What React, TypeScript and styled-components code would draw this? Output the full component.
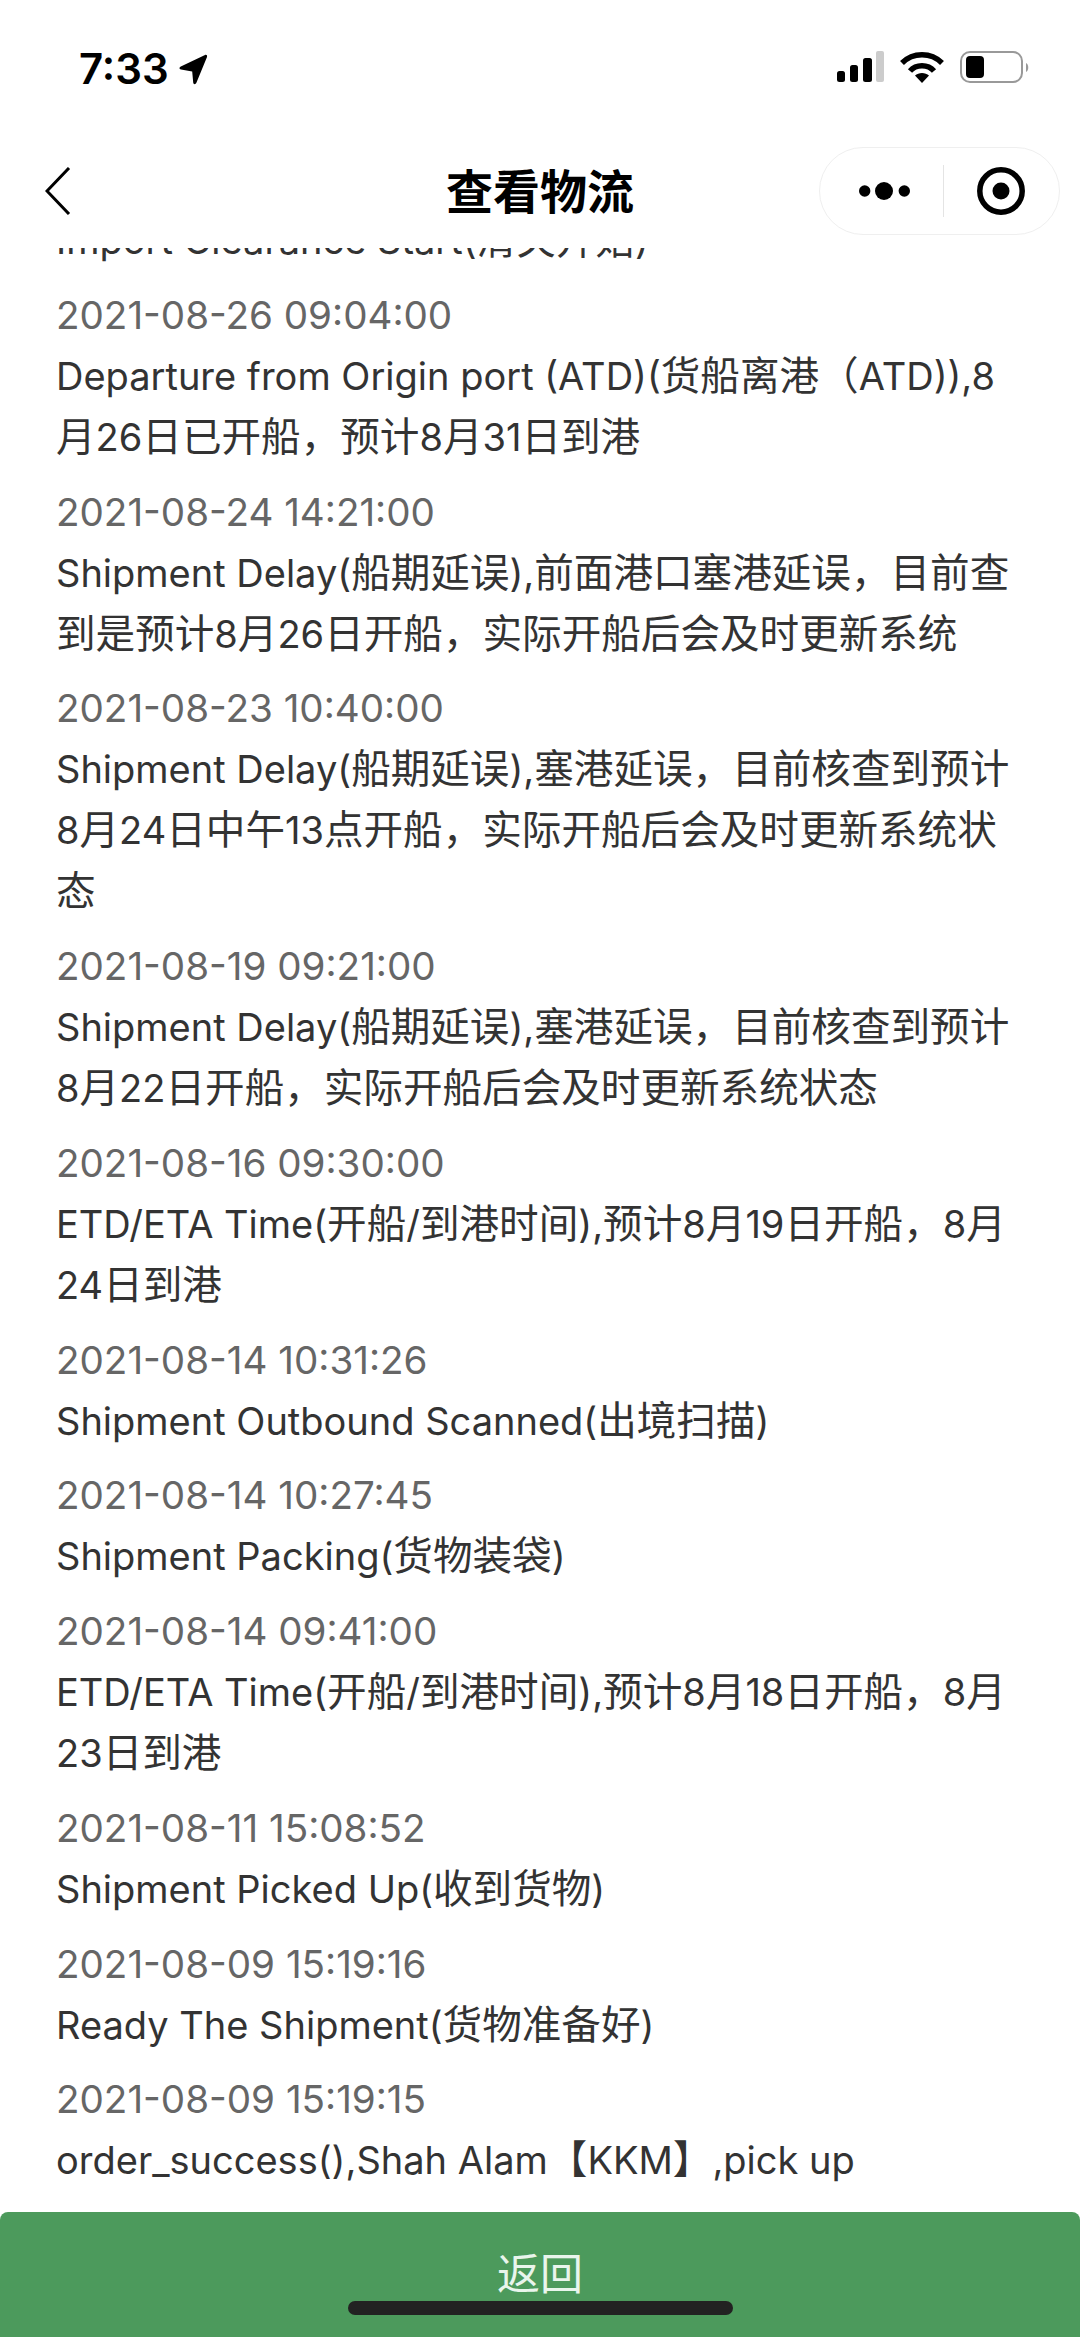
import React from 'react'
import styled, { createGlobalStyle } from 'styled-components'

const GlobalStyle = createGlobalStyle`
  html, body {
    margin: 0;
    padding: 0;
    background: #ffffff;
  }
  * {
    box-sizing: border-box;
  }
`

const Page = styled.div`
  width: 1080px;
  height: 2337px;
  display: flex;
  flex-direction: column;
  position: relative;
  overflow: hidden;
  background: #ffffff;
  font-family: Inter, 'Noto Sans CJK SC', sans-serif;
`

const StatusBar = styled.div`
  height: 136px;
  flex: none;
  padding: 51px 51px 0 79px;
  display: flex;
  justify-content: space-between;
  align-items: flex-start;
`

const Clock = styled.div`
  display: flex;
  align-items: center;
  gap: 10px;
  font-size: 42px;
  line-height: 36px;
  font-weight: 600;
  color: #000000;
`

const StatusIcons = styled.div`
  display: flex;
  align-items: center;
  gap: 16px;
`

const NavBar = styled.div`
  height: 112px;
  flex: none;
  padding: 11px 20px 13px 45px;
  display: flex;
  align-items: center;
  justify-content: space-between;
  position: relative;
`

const Title = styled.div`
  position: absolute;
  left: 0;
  right: 0;
  top: 24px;
  text-align: center;
  font-size: 47px;
  line-height: 64px;
  font-weight: 700;
  color: #000000;
`

const Capsule = styled.div`
  width: 241px;
  height: 88px;
  border: 1px solid #efefef;
  border-radius: 44px;
  display: flex;
  align-items: center;
  background: #ffffff;
`

const CapsuleCell = styled.div<{ $shift?: number }>`
  flex: 1;
  display: flex;
  align-items: center;
  justify-content: center;
  padding-left: ${(p) => p.$shift ?? 0}px;
`

const CapsuleDivider = styled.div`
  width: 1px;
  height: 52px;
  background: #e4e4e4;
`

const Scroller = styled.div`
  flex: 1;
  min-height: 0;
  overflow: hidden;
`

const Track = styled.div`
  margin-top: -38px;
  padding-left: 56px;
`

const Item = styled.div`
  margin-bottom: 13.75px;
`

const Time = styled.div`
  height: 61px;
  font-size: 38.6px;
  line-height: 61px;
  color: #666666;
  white-space: nowrap;
`

const Line = styled.div`
  height: 61px;
  font-size: 38px;
  line-height: 61px;
  color: #333333;
  white-space: nowrap;
`

const Cjk = styled.span`
  font-size: 39.6px;
  line-height: 0;
`

const Footer = styled.div`
  height: 125px;
  flex: none;
  background: #4c9a5c;
  border-radius: 8px 8px 0 0;
  display: flex;
  justify-content: center;
  padding-top: 31px;
  font-size: 43px;
  line-height: 62px;
  color: #e9f5ec;
`

const HomeBar = styled.div`
  position: absolute;
  left: 348px;
  top: 2301px;
  width: 385px;
  height: 14px;
  border-radius: 7px;
  background: #222222;
`

type LogItem = {
  time?: string
  lines: string[]
}

const items: LogItem[] = [
  { lines: ['Import Clearance Start(清关开始)'] },
  {
    time: '2021-08-26 09:04:00',
    lines: ['Departure from Origin port (ATD)(货船离港（ATD)),8', '月26日已开船，预计8月31日到港'],
  },
  {
    time: '2021-08-24 14:21:00',
    lines: ['Shipment Delay(船期延误),前面港口塞港延误，目前查', '到是预计8月26日开船，实际开船后会及时更新系统'],
  },
  {
    time: '2021-08-23 10:40:00',
    lines: ['Shipment Delay(船期延误),塞港延误，目前核查到预计', '8月24日中午13点开船，实际开船后会及时更新系统状', '态'],
  },
  {
    time: '2021-08-19 09:21:00',
    lines: ['Shipment Delay(船期延误),塞港延误，目前核查到预计', '8月22日开船，实际开船后会及时更新系统状态'],
  },
  {
    time: '2021-08-16 09:30:00',
    lines: ['ETD/ETA Time(开船/到港时间),预计8月19日开船，8月', '24日到港'],
  },
  { time: '2021-08-14 10:31:26', lines: ['Shipment Outbound Scanned(出境扫描)'] },
  { time: '2021-08-14 10:27:45', lines: ['Shipment Packing(货物装袋)'] },
  {
    time: '2021-08-14 09:41:00',
    lines: ['ETD/ETA Time(开船/到港时间),预计8月18日开船，8月', '23日到港'],
  },
  { time: '2021-08-11 15:08:52', lines: ['Shipment Picked Up(收到货物)'] },
  { time: '2021-08-09 15:19:16', lines: ['Ready The Shipment(货物准备好)'] },
  { time: '2021-08-09 15:19:15', lines: ['order_success(),Shah Alam【KKM】,pick up'] },
]

// chinese runs are a bit bigger than latin in the original, so split them out
const renderLine = (line: string) =>
  line.split(/([\u3000-\u9fff\uff00-\uffef]+)/).map((part, i) =>
    i % 2 === 1 ? <Cjk key={i}>{part}</Cjk> : part
  )

const App = () => {
  return (
    <Page>
      <GlobalStyle />
      <StatusBar>
        <Clock>
          7:33
          <svg width="29" height="31" viewBox="0 0 29 31">
            <path
              d="M26 1 C27.5 0.5 28.5 1.5 28 3 L17.5 28.5 C16.5 30.8 14.5 30.8 14.2 28.5 L13.2 17.5 L2 15.5 C0 15 0 13.5 1.8 12.5 Z"
              fill="#000"
            />
          </svg>
        </Clock>
        <StatusIcons>
          <svg width="47" height="33" viewBox="0 0 47 33">
            <rect x="0" y="20" width="8" height="11" rx="2.5" fill="#000" />
            <rect x="13" y="14" width="8" height="17" rx="2.5" fill="#000" />
            <rect x="26" y="7" width="9" height="24" rx="2.5" fill="#000" />
            <rect x="39" y="0" width="8" height="31" rx="2" fill="#cccccc" />
          </svg>
          <svg width="44" height="33" viewBox="0 0 44 33" fill="none" stroke="#000">
            <path d="M2 12 C13 1 31 1 42 12" strokeWidth="5.5" />
            <path d="M10 20 C16 13 28 13 34 20" strokeWidth="5.5" />
            <path d="M22 32 L15 24.5 C18.5 21 25.5 21 29 24.5 Z" fill="#000" stroke="none" />
          </svg>
          <svg width="69" height="33" viewBox="0 0 69 33">
            <rect x="1" y="1" width="61" height="30" rx="9" fill="none" stroke="#999999" strokeWidth="2" />
            <rect x="6" y="5" width="18" height="22" rx="4" fill="#000" />
            <path d="M66 12 C69 13 69 20 66 21 Z" fill="#999999" />
          </svg>
        </StatusIcons>
      </StatusBar>
      <NavBar>
        <svg width="26" height="48" viewBox="0 0 26 48" fill="none">
          <path d="M24 1 L2 24 L24 47" stroke="#000" strokeWidth="3" />
        </svg>
        <Title>查看物流</Title>
        <Capsule>
          <CapsuleCell $shift={7}>
            <svg width="51" height="18" viewBox="0 0 51 18">
              <circle cx="5.7" cy="9" r="5.7" fill="#000" />
              <circle cx="25" cy="9" r="9" fill="#000" />
              <circle cx="45.3" cy="9" r="5.7" fill="#000" />
            </svg>
          </CapsuleCell>
          <CapsuleDivider />
          <CapsuleCell>
            <svg width="48" height="48" viewBox="0 0 48 48">
              <circle cx="24" cy="24" r="21.2" fill="none" stroke="#000" strokeWidth="5.5" />
              <circle cx="24" cy="24" r="8.5" fill="#000" />
            </svg>
          </CapsuleCell>
        </Capsule>
      </NavBar>
      <Scroller>
        <Track>
          {items.map((item, i) => (
            <Item key={i}>
              {item.time && <Time>{item.time}</Time>}
              {item.lines.map((line) => (
                <Line key={line}>{renderLine(line)}</Line>
              ))}
            </Item>
          ))}
        </Track>
      </Scroller>
      <Footer>返回</Footer>
      <HomeBar />
    </Page>
  )
}

export default App
